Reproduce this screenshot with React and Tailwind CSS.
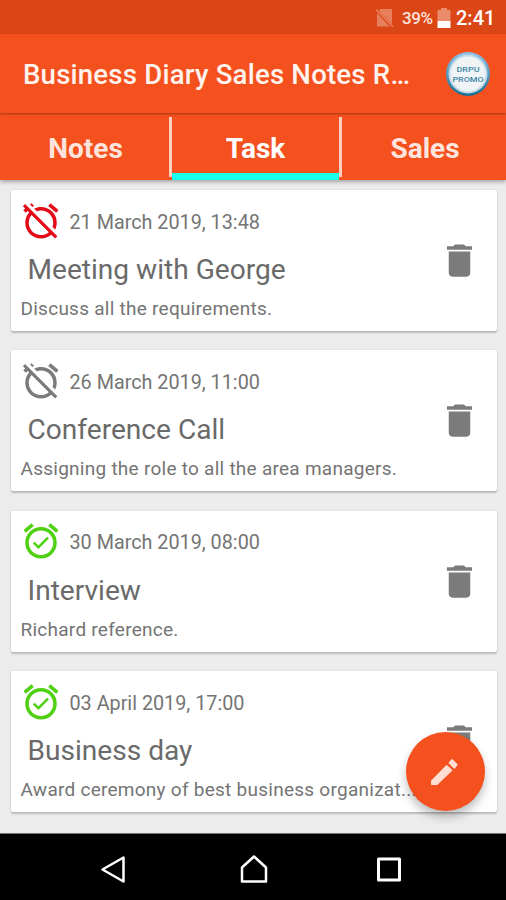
import React, { useState } from "react";
import { MdAlarmOff, MdAlarmOn, MdDelete } from "react-icons/md";

const tasks = [
  {
    id: 1,
    date: "21 March 2019, 13:48",
    title: "Meeting with George",
    note: "Discuss all the requirements.",
    status: "missed",
  },
  {
    id: 2,
    date: "26 March 2019, 11:00",
    title: "Conference Call",
    note: "Assigning the role to all the area managers.",
    status: "off",
  },
  {
    id: 3,
    date: "30 March 2019, 08:00",
    title: "Interview",
    note: "Richard reference.",
    status: "on",
  },
  {
    id: 4,
    date: "03 April 2019, 17:00",
    title: "Business day",
    note: "Award ceremony of best business organizat...",
    status: "on",
  },
];

const iconColor = {
  missed: "text-[#e30b17]",
  off: "text-[#7b7b7b]",
  on: "text-[#4fd011]",
};

function StatusBar() {
  return (
    <div className="h-[34px] shrink-0 bg-[#db4616] flex items-center justify-end pr-[11px] pt-0.5 text-white">
      <svg viewBox="0 0 20 20" className="w-5 h-5 mr-[7px]">
        <path d="M5.5 1H17v15.5L4 3z" fill="#e87f5c" />
        <path d="M2 5v13.5h12.5z" fill="#e87f5c" />
        <path d="M1 1.5L18 19" stroke="#e87f5c" strokeWidth="1.5" />
      </svg>
      <span className="text-[17px] leading-5 font-medium text-[#fbe3db] w-[32px] tracking-[-0.4px]">39%</span>
      <svg viewBox="0 0 14 20" className="w-3.5 h-5 ml-[3px] mr-[5px]">
        <path d="M4 0h6v2h3.5v11H.5V2H4z" fill="#ea8b6c" />
        <path d="M.5 13h13v7H.5z" fill="#fff" />
      </svg>
      <span className="text-[20px] leading-5 font-medium w-[39px] whitespace-nowrap">2:41</span>
    </div>
  );
}

function Logo() {
  return (
    <svg viewBox="0 0 44 44" className="w-11 h-11">
      <defs>
        <linearGradient id="ring" x1="0" y1="0" x2="0" y2="1">
          <stop offset="0" stopColor="#8fc3ea" />
          <stop offset="1" stopColor="#176f94" />
        </linearGradient>
      </defs>
      <circle cx="22" cy="22" r="22" fill="url(#ring)" />
      <circle cx="22" cy="22" r="19.5" fill="#c3dbe9" />
      <circle cx="22" cy="22" r="17.5" fill="#f1f4f6" />
      <g fill="#3d85a3" fontSize="8" fontWeight="500" textAnchor="middle" className="font-[Roboto,sans-serif]">
        <text x="22" y="20" textLength="23" lengthAdjust="spacingAndGlyphs">DRPU</text>
        <text x="22" y="29.5" textLength="31" lengthAdjust="spacingAndGlyphs">PROMO</text>
      </g>
    </svg>
  );
}

function TaskCard({ task }) {
  const Alarm = task.status === "on" ? MdAlarmOn : MdAlarmOff;

  return (
    <div className="h-[141px] bg-white rounded-[2px] shadow-[0_2px_2px_rgba(0,0,0,0.2),0_0_2px_rgba(0,0,0,0.12)] flex items-center pl-[10px] pr-[16px] text-[#6a6a6a]">
      <div className="w-[394px] h-full pt-[9px]">
        <div className="flex items-center h-[43px]">
          <Alarm className={`w-[42px] h-[42px] shrink-0 -ml-px ${iconColor[task.status]}`} />
          <span className="text-[19.8px] leading-6 ml-[8px] mt-1 whitespace-nowrap text-[#747474]">{task.date}</span>
        </div>
        <div className="text-[28.1px] leading-[34px] mt-[11px] pl-[7px] whitespace-nowrap">{task.title}</div>
        <div className="text-[19px] tracking-[0.26px] leading-6 mt-[10px] whitespace-nowrap text-[#747474]">
          {task.note}
        </div>
      </div>
      <button className="ml-auto text-[#7b7b7b]">
        <MdDelete className="w-[43px] h-[43px]" />
      </button>
    </div>
  );
}

export default function App() {
  const [tab, setTab] = useState("Task");

  return (
    <div className="relative w-[506px] h-[900px] overflow-hidden bg-[#ececec] flex flex-col font-[Roboto,sans-serif]">
      <StatusBar />

      {/* App bar */}
      <header className="relative z-20 h-[79px] shrink-0 bg-[#f4511e] flex items-center justify-between pl-[23px] pr-[16px] shadow-[0_1px_2px_rgba(0,0,0,0.35)]">
        <h1 className="text-[27.6px] tracking-[0.2px] leading-8 pt-[3px] font-medium text-[#fff3ee] whitespace-nowrap">
          Business Diary Sales Notes R…
        </h1>
        <Logo />
      </header>

      {/* Tabs */}
      <nav className="relative z-10 h-[67px] shrink-0 bg-[#f4511e] grid grid-cols-[169px_3px_167px_3px_164px] shadow-[0_2px_4px_rgba(0,0,0,0.3)]">
        {["Notes", "Task", "Sales"].map((name, i) => (
          <React.Fragment key={name}>
            {i > 0 && <span className="bg-[#fbd0c2] mt-1 mb-[3px]" />}
            <button
              onClick={() => setTab(name)}
              className={`text-[28px] font-bold border-b-[7px] pt-[11px] leading-8 ${
                tab === name ? "text-white border-b-[#18ffee]" : "pl-[2px] text-[#fde5dd] border-b-transparent"
              }`}
            >
              {name}
            </button>
          </React.Fragment>
        ))}
      </nav>

      {/* Task list */}
      <main className="flex-1 min-h-0 pt-[10px] pl-[10.5px] pr-[9.5px] flex flex-col gap-[19.4px]">
        {tasks.map((task) => (
          <TaskCard key={task.id} task={task} />
        ))}
      </main>

      <button className="absolute left-[405.5px] top-[731.5px] w-[79px] h-[79px] rounded-full bg-[#f4511e] text-[#ffdfd4] flex items-center justify-center shadow-[0_6px_10px_rgba(0,0,0,0.25)]">
        <svg viewBox="0 0 150 150" className="w-[50px] h-[50px]" fill="currentColor" stroke="currentColor" strokeWidth="4" strokeLinejoin="round">
          <path d="M35 105L80 59l15 14-44 42H35z" />
          <path d="M88 51l8-10 15 15-8 10z" />
        </svg>
      </button>

      {/* System navigation */}
      <footer className="h-[67px] shrink-0 bg-black border-t border-[#777] flex items-center justify-between pl-[100px] pr-[104px] pt-[3px]">
        <svg viewBox="0 0 28 30" className="w-7 h-[30px]" fill="none" stroke="#fff" strokeWidth="2.5" strokeLinejoin="round">
          <path d="M23.5 3.5v24L2.5 15.5z" />
        </svg>
        <svg viewBox="0 0 30 30" className="w-[30px] h-[30px] ml-[3px]" fill="none" stroke="#fff" strokeWidth="2.5" strokeLinejoin="round">
          <path d="M15 2.5L27 13.5v14H3v-14z" />
        </svg>
        <svg viewBox="0 0 26 26" className="w-[26px] h-[26px]" fill="none" stroke="#fff" strokeWidth="3" strokeLinejoin="round">
          <path d="M2.5 3h21v21h-21z" />
        </svg>
      </footer>
    </div>
  );
}
